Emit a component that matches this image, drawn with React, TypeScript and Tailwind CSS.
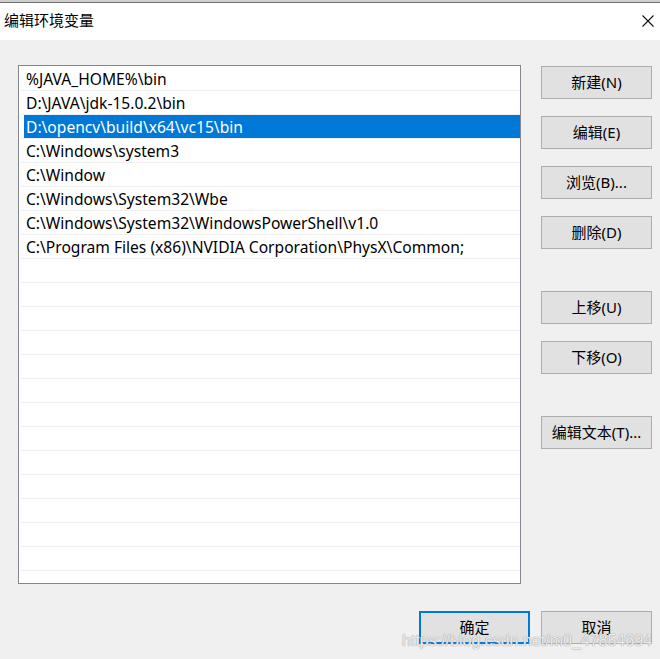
import React from "react"

const paths = [
    "%JAVA_HOME%\\bin",
    "D:\\JAVA\\jdk-15.0.2\\bin",
    "D:\\opencv\\build\\x64\\vc15\\bin",
    "C:\\Windows\\system3",
    "C:\\Window",
    "C:\\Windows\\System32\\Wbe",
    "C:\\Windows\\System32\\WindowsPowerShell\\v1.0",
    "C:\\Program Files (x86)\\NVIDIA Corporation\\PhysX\\Common;",
]

const SELECTED = 2
const TOTAL_ROWS = 22

const font = { fontFamily: '"Noto Sans", "Noto Sans CJK SC", sans-serif' }

const Btn: React.FC<{ label: string; primary?: boolean; className?: string }> = ({ label, primary, className }) => (
    <button
        className={
            "h-[33px] w-[111px] bg-[#e1e1e1] text-[15px] text-black flex items-center justify-center " +
            (primary ? "border-2 border-[#0078d7] " : "border border-[#adadad] ") +
            (className || "")
        }
    >
        {label}
    </button>
)

const App: React.FC = () => {
    const rows = Array.from({ length: TOTAL_ROWS }, (_, i) => paths[i] ?? "")

    return (
        <div className="relative w-[660px] h-[659px] flex flex-col overflow-hidden bg-[#f0f0f0]" style={font}>
            {/* other window peeking above */}
            <div className="h-[3px] bg-[#cfcfcf] border-b border-[#6f6f6f]" />

            {/* title bar */}
            <div className="h-[37px] bg-white flex items-center justify-between pl-[4px] pr-[6px]">
                <span className="text-[15px] text-black -mt-[2px]">编辑环境变量</span>
                <svg width="12" height="12" viewBox="0 0 12 12" className="-mt-[2px]">
                    <path d="M0.5 0.5 L11.5 11.5 M11.5 0.5 L0.5 11.5" stroke="#111" strokeWidth="1.1" />
                </svg>
            </div>

            {/* body */}
            <div className="flex-1 flex flex-col pt-[25px] pl-[18px]">
                <div className="flex gap-[20px]">
                    <div className="w-[503px] h-[519px] bg-white border border-[#828790] overflow-hidden pt-[1px] pl-[1px]">
                        {rows.map((p, i) => (
                            <div key={i} className="h-[24px] border-b border-[#f0f0f0] flex">
                                <div
                                    className={
                                        "flex-1 flex items-center text-[15.6px] whitespace-nowrap pt-[2px] " +
                                        (i === SELECTED
                                            ? "ml-[4px] pl-[2px] bg-[#0078d7] text-white"
                                            : "pl-[6px] text-black")
                                    }
                                >
                                    {p}
                                </div>
                            </div>
                        ))}
                    </div>

                    <div className="flex flex-col pt-[1px]">
                        <Btn label="新建(N)" />
                        <Btn label="编辑(E)" className="mt-[17px]" />
                        <Btn label="浏览(B)..." className="mt-[17px]" />
                        <Btn label="删除(D)" className="mt-[17px]" />
                        <Btn label="上移(U)" className="mt-[42px]" />
                        <Btn label="下移(O)" className="mt-[17px]" />
                        <Btn label="编辑文本(T)..." className="mt-[42px]" />
                    </div>
                </div>

                <div className="flex justify-end gap-[11px] pr-[8px] mt-[27px]">
                    <Btn label="确定" primary />
                    <Btn label="取消" />
                </div>
            </div>

            {/* watermark */}
            <div
                className="absolute left-[402px] top-[629px] text-[16px] text-white/80 whitespace-nowrap"
                style={{ fontFamily: '"Liberation Sans", Arial, sans-serif', textShadow: "0 0 1px #9a9a9a, 0 0 1px #9a9a9a" }}
            >
                https://blog.csdn.net/m0_47854694
            </div>
        </div>
    )
}

export default App
